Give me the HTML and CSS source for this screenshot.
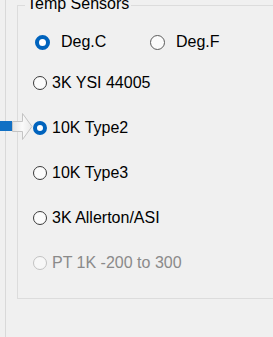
FILE: index.html
```html
<!DOCTYPE html>
<html lang="en">
<head>
    <meta charset="UTF-8">
    <meta name="viewport" content="width=device-width, initial-scale=1.0">
    <title>Temp Sensors</title>
    <link rel="stylesheet" href="styles.css">
</head>
<body>
    <div class="panel">
        <div class="group">
            <span class="legend">Temp Sensors</span>
            <div class="units">
                <label class="unit unit-c"><span class="radio big checked"></span>Deg.C</label>
                <label class="unit"><span class="radio big"></span>Deg.F</label>
            </div>
            <ul class="sensors">
                <li><span class="radio"></span>3K YSI 44005</li>
                <li><span class="radio checked"></span>10K Type2</li>
                <li><span class="radio"></span>10K Type3</li>
                <li><span class="radio"></span>3K Allerton/ASI</li>
                <li class="disabled"><span class="radio"></span>PT 1K -200 to 300</li>
            </ul>
        </div>
    </div>
    <!-- pointer arrow on the selected sensor -->
    <svg class="pointer" width="33" height="30" viewBox="0 0 33 30">
        <defs>
            <linearGradient id="arrowFill" x1="0" y1="0" x2="1" y2="0">
                <stop offset="0" stop-color="#e4e4e4"/>
                <stop offset="0.5" stop-color="#fafafa"/>
                <stop offset="1" stop-color="#e8e8e8"/>
            </linearGradient>
        </defs>
        <rect x="0" y="9" width="12" height="10" fill="#1170c4"/>
        <path d="M12.5 9.5 H22.5 V1.5 L32 14.5 L22.5 27.5 V19.5 H12.5 Z" fill="url(#arrowFill)" stroke="#c4c4c4" stroke-width="1"/>
    </svg>
</body>
</html>
```
FILE: styles.css
```css
*{
    margin: 0;
    padding: 0;
    box-sizing: border-box;
}
ul{
    list-style: none;
}
html,body{
    width: 100%;
    height: 100%;
    overflow: hidden;
}
body{
    background-color: #f0f0f0;
    font-family: "Liberation Sans", Arial, sans-serif;
    font-size: 16px;
    color: #000;
    position: relative;
}

.panel{
    margin-left: 5px;
    height: 100%;
    border-left: 1px solid #d9d9d9;
    padding-left: 11px;
    padding-top: 5px;
}
.group{
    position: relative;
    border: 1px solid #dcdcdc;
    border-right: none;
    padding: 26px 0 13px 0;
}
.legend{
    position: absolute;
    top: -11px;
    left: 7px;
    padding: 0 2px;
    line-height: 18px;
    background-color: #f0f0f0;
}

.units{
    display: flex;
    height: 20px;
    align-items: center;
    padding-left: 17px;
    margin-bottom: 8px;
}
.unit{
    display: flex;
    align-items: center;
    gap: 11px;
}
.unit-c{
    width: 115px;
}

.sensors li{
    height: 45px;
    display: flex;
    align-items: center;
    gap: 5px;
    padding-left: 15px;
}
.sensors li.disabled{
    color: #8a8a8a;
}

.radio{
    display: inline-block;
    flex: none;
    width: 14px;
    height: 14px;
    border-radius: 50%;
    border: 1px solid #3a3a3a;
    background-color: #fbfbfb;
}
.radio.big{
    width: 15px;
    height: 15px;
    border-color: #5a5a5a;
}
.radio.checked{
    border: 4px solid #0063bd;
    background-color: #fff;
}
.disabled .radio{
    border-color: #c2c2c2;
    background-color: #f7f7f7;
}

.pointer{
    position: absolute;
    left: 0;
    top: 112px;
}
```
